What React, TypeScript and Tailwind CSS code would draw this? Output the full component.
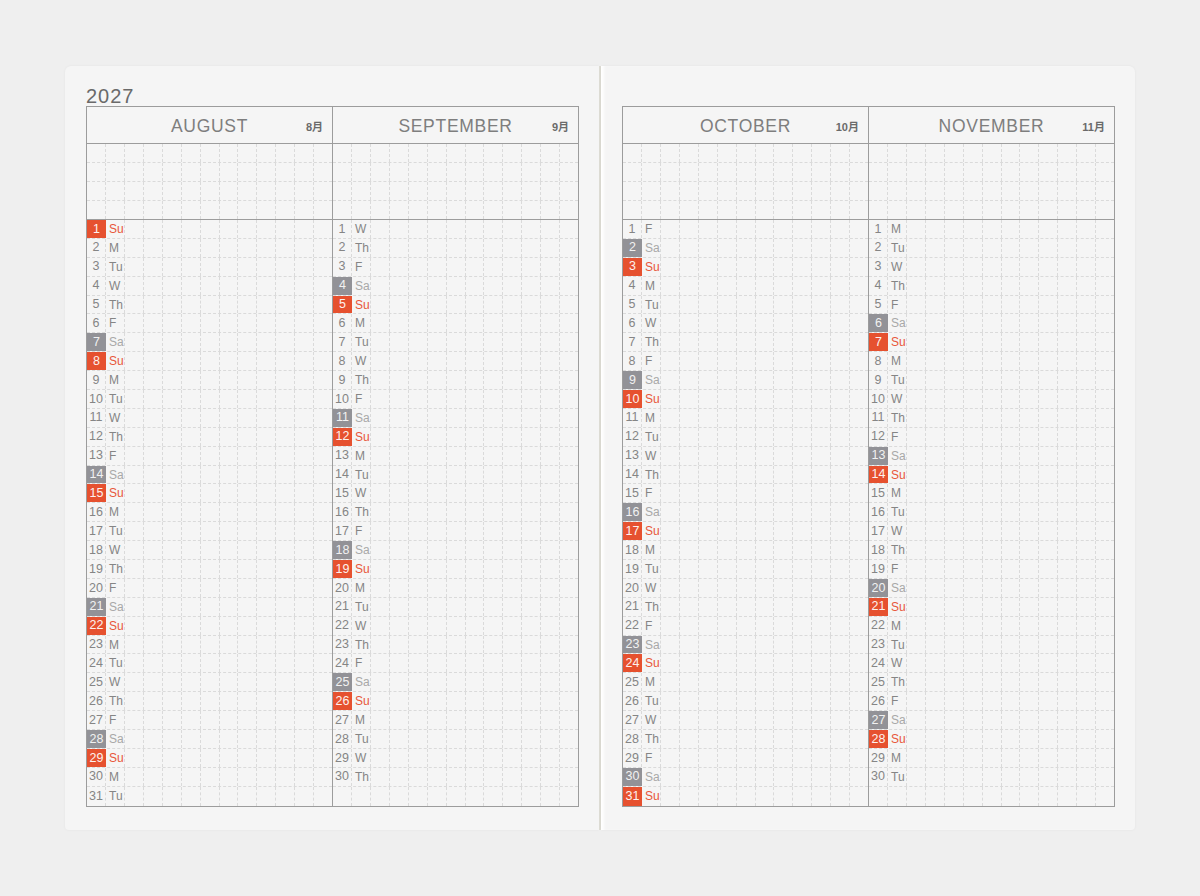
const WD = ['Su', 'M', 'Tu', 'W', 'Th', 'F', 'Sa'];

type Month = { name: string; jp: string; start: number; days: number };

const leftMonths: Month[] = [
  { name: 'AUGUST', jp: '8月', start: 0, days: 31 },
  { name: 'SEPTEMBER', jp: '9月', start: 3, days: 30 },
];

const rightMonths: Month[] = [
  { name: 'OCTOBER', jp: '10月', start: 5, days: 31 },
  { name: 'NOVEMBER', jp: '11月', start: 1, days: 30 },
];

const FONT = { fontFamily: '"Liberation Sans", "Noto Sans CJK JP", sans-serif' };

function EmptyCells() {
  return (
    <>
      {Array.from({ length: 11 }).map((_, i) => (
        <div
          key={i}
          className={i === 10 ? 'flex-1' : 'flex-1 border-r border-dashed border-[#dadada]'}
        />
      ))}
    </>
  );
}

function DayRow({ day, wd, last }: { day?: number; wd: number; last: boolean }) {
  const sun = day !== undefined && wd === 0;
  const sat = day !== undefined && wd === 6;
  return (
    <div className={last ? 'flex h-[18.9px]' : 'flex h-[18.9px] border-b border-dashed border-[#dadada]'}>
      <div
        className={
          sun
            ? 'w-[19px] shrink-0 flex items-center justify-center bg-[#e6512f] text-[#fdf1ee] text-[12.5px]'
            : sat
            ? 'w-[19px] shrink-0 flex items-center justify-center bg-[#929297] text-[#f1f1f1] text-[12.5px]'
            : 'w-[19px] shrink-0 flex items-center justify-center border-r border-dashed border-[#dadada] text-[#858585] text-[12.5px]'
        }
      >
        {day}
      </div>
      <div
        className={
          sun
            ? 'w-[19px] shrink-0 flex items-center pl-[3px] border-r border-dashed border-[#dadada] text-[#e8573b] text-[12px]'
            : sat
            ? 'w-[19px] shrink-0 flex items-center pl-[3px] border-r border-dashed border-[#dadada] text-[#a8a8a8] text-[12px]'
            : 'w-[19px] shrink-0 flex items-center pl-[3px] border-r border-dashed border-[#dadada] text-[#858585] text-[12px]'
        }
      >
        {day !== undefined ? WD[wd] : ''}
      </div>
      <EmptyCells />
    </div>
  );
}

function MonthColumn({ m, first }: { m: Month; first: boolean }) {
  return (
    <div className={first ? 'flex-1 flex flex-col border-r border-[#9c9c9c]' : 'flex-1 flex flex-col'}>
      <div className="h-[37px] border-b border-[#9c9c9c] flex items-center relative">
        <div className="flex-1 text-center text-[17.5px] tracking-[0.7px] text-[#7e7e7e] pt-[3px]">{m.name}</div>
        <div className="absolute right-[9px] top-[12px] text-[11px] font-semibold text-[#6a6a6a]">{m.jp}</div>
      </div>
      {[0, 1, 2, 3].map((r) => (
        <div
          key={r}
          className={
            r === 3
              ? 'flex h-[19px] border-b border-[#9c9c9c]'
              : 'flex h-[19px] border-b border-dashed border-[#dadada]'
          }
        >
          <div className="w-[19px] shrink-0 border-r border-dashed border-[#dadada]" />
          <div className="w-[19px] shrink-0 border-r border-dashed border-[#dadada]" />
          <EmptyCells />
        </div>
      ))}
      {Array.from({ length: 31 }).map((_, i) => {
        const day = i < m.days ? i + 1 : undefined;
        return <DayRow key={i} day={day} wd={(m.start + i) % 7} last={i === 30} />;
      })}
    </div>
  );
}

function Page({ months, year, side }: { months: Month[]; year?: string; side: 'left' | 'right' }) {
  return (
    <div
      className={
        side === 'left'
          ? 'w-[534px] h-[764px] bg-[#f5f5f5] rounded-tl-[6px] rounded-bl-[4px] pl-[21px] pt-[16px] shadow-[0_0_3px_rgba(0,0,0,0.05)]'
          : 'w-[534px] h-[764px] bg-[#f5f5f5] rounded-tr-[6px] rounded-br-[4px] pl-[21px] pt-[16px] shadow-[0_0_3px_rgba(0,0,0,0.05),inset_4px_0_3px_-1px_rgba(255,255,255,0.95)]'
      }
    >
      <div className="h-[24px] leading-[28px] text-[20px] tracking-[1px] text-[#6a6a6a]">{year}</div>
      <div className="w-[493px] flex border border-[#9c9c9c]">
        {months.map((m, i) => (
          <MonthColumn key={m.name} m={m} first={i === 0} />
        ))}
      </div>
    </div>
  );
}

export default function App() {
  return (
    <div className="w-full min-h-screen bg-[#efefef] flex justify-center pt-[66px]" style={FONT}>
      <Page months={leftMonths} year="2027" side="left" />
      <div className="w-[2px] h-[764px] bg-[#dddcd4]" />
      <Page months={rightMonths} side="right" />
    </div>
  );
}
